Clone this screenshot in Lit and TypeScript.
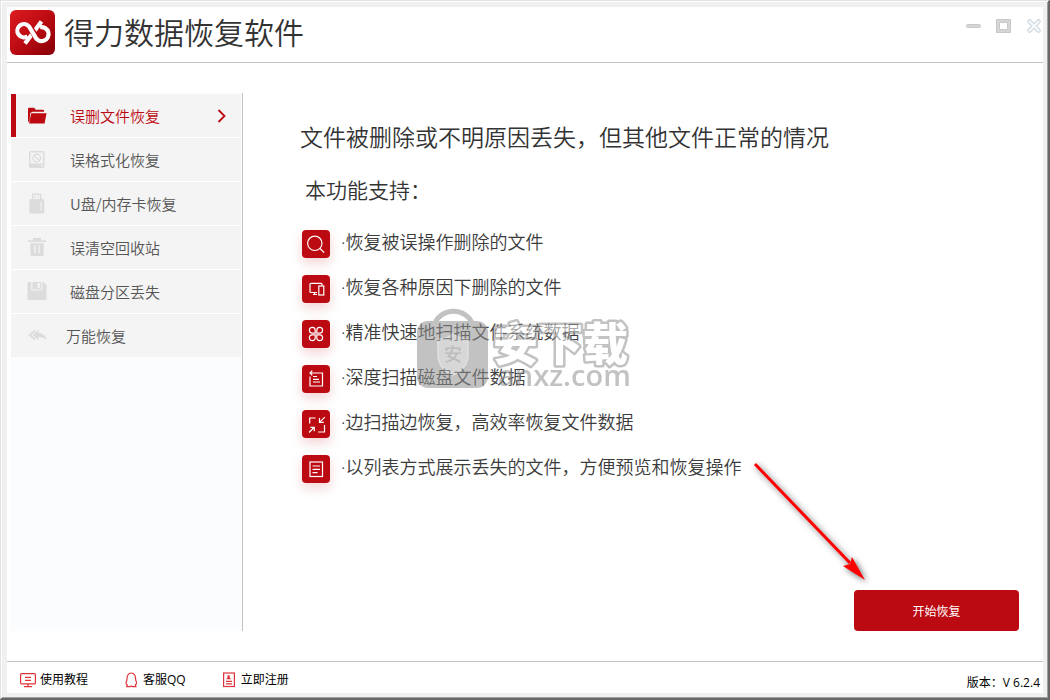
import { LitElement, html, css, svg } from "lit";
import { customElement, state } from "lit/decorators.js";
import { classMap } from "lit/directives/class-map.js";

const navIcons = {
  folder: svg`<path fill="#bc0a12" d="M1 4q0-1.200 1.200-1.200h5l1.500 2h7.300q1 0 1 1v1H5.500L3.300 8 2.500 16 1 17z"/><path fill="#bc0a12" d="M4.200 8.200h15.300L17.600 18.500H2z"/>`,
  disk: svg`<path fill="#dcdcdc" fill-rule="evenodd" d="M3.500 2h12.500q1.500 0 1.500 1.500v14q0 1.500-1.500 1.500h-12.500q-1.500 0-1.500-1.500v-14q0-1.500 1.500-1.500zM3.500 3.500v11h12.500v-11zM14 16v1.600h1.800V16z"/><g fill="none" stroke="#dcdcdc" stroke-width="1.300"><circle cx="9.800" cy="9" r="3.800"/><path d="M7.200 6.400l5.200 5.200"/></g>`,
  usb: svg`<path fill="none" stroke="#dcdcdc" stroke-width="1.400" d="M5.700 7V1.200h8V7"/><path fill="#dcdcdc" d="M7.300 3.500h1.700v1.200H7.300zM10.400 3.500h1.700v1.200h-1.700z"/><rect x="2.300" y="6" width="15" height="14.500" rx="1.500" fill="#dcdcdc"/><path stroke="#f4f4f4" stroke-width="1" d="M14 9v9"/>`,
  trash: svg`<path fill="#dcdcdc" d="M6 1h8v2.300h5v1.700H1V3.300h5zM3.300 6.300h13.400v11q0 1.700-1.700 1.700H5q-1.700 0-1.700-1.700z"/><path stroke="#f4f4f4" stroke-width="1.300" d="M7.900 8.200v8M12.100 8.200v8"/>`,
  floppy: svg`<path fill="#dcdcdc" d="M.500 1h15.500l3.500 3v15H.500z"/><path fill="none" stroke="#f4f4f4" stroke-width="1.200" d="M4.800 1v7q0 1 1 1h8q1 0 1-1V1"/><path fill="#f4f4f4" d="M10.500 2h2.200v5h-2.200z"/>`,
  reply: svg`<path fill="none" stroke="#dcdcdc" stroke-width="1.800" d="M8 5.500L2.800 10 8 14.500"/><path fill="#dcdcdc" d="M11.500 4.500v3.300q7 .4 8 7.700-2.500-3.600-8-3.500v3.300L5.500 10z"/>`,
};

const featureIcons = {
  search: svg`<circle cx="12.800" cy="13.300" r="7.200"/><path d="M18 18.500l4.200 4.200"/>`,
  devices: svg`<path d="M15 17.500H9q-1 0-1-1V9.300q0-1 1-1h10q1 0 1 1V11M11 19.500h4M12.500 17.500v2"/><rect x="16.800" y="11" width="5" height="9"/>`,
  clover: svg`<path d="M13.200 13.200h-3a2.900 2.900 0 1 1 3-3zM14.800 13.200h3a2.900 2.900 0 1 0-3-3zM13.200 14.800h-3a2.900 2.900 0 1 0 3 3zM14.800 14.800h3a2.900 2.900 0 1 1-3 3z"/>`,
  scan: svg`<path d="M8 8h12.500v13H8V11.500M10.300 5.600L8 8l2.300 2.400M11 11.500h4M11 14.300h6M11 17h7"/>`,
  shrink: svg`<path d="M13.500 8H7.700v5.500M22.500 15v7h-6.300M22.800 7.200l-5 5M17.500 8v4.300h4.300M7 22.500l5-5M8.300 17.300h4v4"/>`,
  list: svg`<rect x="8" y="7" width="12.500" height="14.500"/><path d="M10.500 11h7.500M10.500 14.300h7.500M10.500 17.600h5"/>`,
};

const footIcons = {
  board: svg`<rect x=".600" y="1.600" width="14.800" height="10.300" rx="1"/><path d="M5 5.300h6M5 8.300h6M8 12v2.500M4 14.700h8"/>`,
  penguin: svg`<path d="M4.300 13C2.500 12 2.700 10.500 3.900 8.300 3.500 4 5.500 1 8.300 1s4.800 3 4.400 7.300c1.200 2.200 1.400 3.700-.400 4.700l.6 1.700H9.500L8.300 14l-1.200.7H3.700z"/>`,
  form: svg`<rect x="2.600" y="1" width="10.800" height="13.500"/><path d="M5 11.800h6M5 9.300h6"/><path fill="#e0343c" stroke="none" d="M6.500 3.300h2.200v2l1.300 1.900H5.200l1.300-1.900z"/>`,
};

const navItems: { label: string; icon: keyof typeof navIcons }[] = [
  { label: "误删文件恢复", icon: "folder" },
  { label: "误格式化恢复", icon: "disk" },
  { label: "U盘/内存卡恢复", icon: "usb" },
  { label: "误清空回收站", icon: "trash" },
  { label: "磁盘分区丢失", icon: "floppy" },
  { label: "万能恢复", icon: "reply" },
];

const features: { label: string; icon: keyof typeof featureIcons }[] = [
  { label: "恢复被误操作删除的文件", icon: "search" },
  { label: "恢复各种原因下删除的文件", icon: "devices" },
  { label: "精准快速地扫描文件系统数据", icon: "clover" },
  { label: "深度扫描磁盘文件数据", icon: "scan" },
  { label: "边扫描边恢复，高效率恢复文件数据", icon: "shrink" },
  { label: "以列表方式展示丢失的文件，方便预览和恢复操作", icon: "list" },
];

const links: { label: string; icon: keyof typeof footIcons }[] = [
  { label: "使用教程", icon: "board" },
  { label: "客服QQ", icon: "penguin" },
  { label: "立即注册", icon: "form" },
];

@customElement("app-root")
export class AppRoot extends LitElement {
  @state() private active = 0;

  static styles = css`
    :host {
      display: block;
      font-family: "Noto Sans CJK SC", sans-serif;
      color: #333;
    }
    * {
      box-sizing: border-box;
    }
    button {
      font: inherit;
      color: inherit;
      border: 0;
      padding: 0;
      background: none;
      cursor: pointer;
    }
    svg {
      display: block;
      flex: none;
    }
    .frame {
      display: flex;
      background: #f0f0f0;
      min-height: 100vh;
      border: 1px solid #e3e3e3;
      border-right: 2px solid #696969;
      border-bottom: 2px solid #696969;
      box-shadow: inset 1px 1px #fff, inset -1px -1px #a0a0a0;
      padding: 6px 5px 5px 6px;
    }
    .sheet {
      position: relative;
      flex: 1;
      display: flex;
      flex-direction: column;
      background: #fff;
    }
    .top {
      display: flex;
      align-items: center;
      height: 56px;
      padding: 0 1px 4px 3px;
      border-bottom: 1px solid #c3c3c3;
    }
    .title {
      flex: 1;
      margin: 0 0 0 9px;
      padding-bottom: 3px;
      font-size: 30px;
      line-height: 44px;
      font-weight: 350;
    }
    .controls {
      display: flex;
      gap: 14px;
      padding-bottom: 14px;
    }
    .body {
      flex: 1;
      display: flex;
      padding: 30px 24px 30px 4px;
    }
    .side {
      width: 232px;
      padding: 1px 1px 0 0;
      border-right: 1px solid #c3c3c3;
      background: #fbfcfe;
    }
    .nav {
      display: grid;
      gap: 1px;
      background: #fff;
    }
    .item {
      display: flex;
      align-items: center;
      height: 43px;
      padding: 0 15px 0 11px;
      border-left: 5px solid #f4f4f4;
      background: #f4f4f4;
      font-size: 15px;
      font-weight: 350;
      color: #555;
      text-align: left;
    }
    .item.active {
      border-left-color: #bc0a12;
      color: #bc0a12;
    }
    .item .name {
      flex: 1;
      margin-left: 23px;
    }
    .item.near .name {
      margin-left: 19px;
    }
    .main {
      flex: 1;
      display: flex;
      flex-direction: column;
      padding: 28px 0 0 57px;
    }
    .lead {
      margin: 0;
      font-size: 23px;
      line-height: 30px;
      font-weight: 350;
    }
    .sub {
      margin: 23px 0 26px 5px;
      font-size: 21px;
      line-height: 30px;
      font-weight: 350;
    }
    .features {
      list-style: none;
      margin: 0 0 0 2px;
      padding: 0;
      display: grid;
      gap: 17px;
      font-family: "Noto Sans", "Noto Sans CJK SC", sans-serif;
      font-size: 18px;
      line-height: 24px;
      font-weight: 350;
      color: #3c3c3c;
    }
    .feature {
      display: flex;
      gap: 11px;
      height: 28px;
    }
    .tile {
      width: 28px;
      height: 28px;
      border-radius: 4px;
      background: #bc0a12;
      box-shadow: 0 5px 12px rgba(188, 10, 18, 0.18);
    }
    .line {
      fill: none;
      stroke: #fff;
      stroke-width: 1.2;
    }
    .start {
      align-self: flex-end;
      margin-top: auto;
      width: 165px;
      height: 41px;
      border-radius: 4px;
      background: #bc0a12;
      color: #fff;
      font-size: 12px;
    }
    .foot {
      display: flex;
      align-items: center;
      gap: 35px;
      height: 32px;
      padding: 5px 3px 0 13px;
      border-top: 1px solid #c3c3c3;
      font-family: "Open Sans", "Noto Sans CJK SC", sans-serif;
      font-size: 12px;
      line-height: 18px;
      color: #000;
    }
    .link {
      display: flex;
      align-items: center;
      gap: 4px;
      color: inherit;
      text-decoration: none;
    }
    .red {
      fill: none;
      stroke: #e0343c;
      stroke-width: 1.2;
    }
    .version {
      margin: 6px 0 0 auto;
    }
    .arrow {
      position: absolute;
      left: 743px;
      top: 451px;
      pointer-events: none;
      filter: drop-shadow(2px 2px 3px rgba(0, 0, 0, 0.6));
    }
    .mark {
      position: absolute;
      left: 403px;
      top: 293px;
      pointer-events: none;
    }
    .cn {
      font: 900 45px "Noto Sans CJK SC", sans-serif;
    }
    .com {
      font: 600 29px "Open Sans", sans-serif;
    }
    .seal {
      font: 500 18px "Noto Sans CJK SC", sans-serif;
    }
  `;

  render() {
    return html`
      <div class="frame">
        <div class="sheet">
          <header class="top">
            <svg width="45" height="45" viewBox="0 0 45 45" aria-hidden="true">
              <defs>
                <linearGradient id="lg" x1="0" y1="0" x2="1" y2="1">
                  <stop offset="0" stop-color="#dc1c20" />
                  <stop offset=".5" stop-color="#bc0b12" />
                  <stop offset="1" stop-color="#850006" />
                </linearGradient>
              </defs>
              <rect width="45" height="45" rx="6" fill="url(#lg)" />
              <g fill="none">
                <path stroke="#fff" stroke-width="4.200" d="M31.500 11.500L15 33.500" />
                <path stroke="#b80b12" stroke-width="6" d="M20 17.500L25.500 26" />
                <path stroke="#fff" stroke-width="4.200" d="M17.500 26.300A6.600 6.600 0 1 1 19 16.500L25 26.500A7 7 0 1 0 30 17.300" />
              </g>
            </svg>
            <h1 class="title">得力数据恢复软件</h1>
            <div class="controls">
              <button aria-label="最小化">
                <svg width="17" height="16" viewBox="0 0 17 16"><rect x="1.500" y="6.500" width="14" height="3" rx="1" fill="#d6d6d6" stroke="#c6c9cc" /></svg>
              </button>
              <button aria-label="最大化">
                <svg width="16" height="16" viewBox="0 0 16 16"><path fill="#d6d6d6" stroke="#c6c9cc" fill-rule="evenodd" d="M.500 1.500h14v13H.500zM3.500 4.500v7h8v-7z" /></svg>
              </button>
              <button aria-label="关闭">
                <svg width="16" height="16" viewBox="0 0 16 16"><path stroke="#c8ccd0" stroke-width="4.500" stroke-linecap="round" d="M3.500 3.500l9 9M12.500 3.500l-9 9" /><path stroke="#f3f8fc" stroke-width="2.600" stroke-linecap="round" d="M3.500 3.500l9 9M12.500 3.500l-9 9" /></svg>
              </button>
            </div>
          </header>

          <div class="body">
            <aside class="side">
              <nav class="nav">
                ${navItems.map(
                  (n, i) => html`
                    <button
                      class=${classMap({ item: true, active: i === this.active, near: n.icon === "reply" })}
                      @click=${() => (this.active = i)}
                    >
                      <svg width="20" height="21" viewBox="0 0 20 21" aria-hidden="true">${navIcons[n.icon]}</svg>
                      <span class="name">${n.label}</span>
                      ${i === this.active
                        ? html`<svg width="9" height="14" viewBox="0 0 9 14"><path fill="none" stroke="#bc0a12" stroke-width="1.800" d="M1.500 1l6 6-6 6" /></svg>`
                        : null}
                    </button>
                  `
                )}
              </nav>
            </aside>

            <main class="main">
              <h2 class="lead">文件被删除或不明原因丢失，但其他文件正常的情况</h2>
              <h3 class="sub">本功能支持：</h3>
              <ul class="features">
                ${features.map(
                  (f) => html`
                    <li class="feature">
                      <svg class="tile" viewBox="0 0 28 28" aria-hidden="true"><g class="line">${featureIcons[f.icon]}</g></svg>
                      <span>·${f.label}</span>
                    </li>
                  `
                )}
              </ul>
              <button class="start">开始恢复</button>
            </main>
          </div>

          <footer class="foot">
            ${links.map(
              (l) => html`
                <a class="link" href="#">
                  <svg class="red" width="16" height="16" viewBox="0 0 16 16" aria-hidden="true">${footIcons[l.icon]}</svg>
                  <span>${l.label}</span>
                </a>
              `
            )}
            <span class="version">版本：V 6.2.4</span>
          </footer>

          <svg class="mark" width="230" height="100" viewBox="0 0 230 100" aria-hidden="true">
            <g opacity=".55">
              <path fill="none" stroke="#919191" stroke-width="5" d="M25 23a19.500 17 0 0 1 37 0" />
              <rect x="7" y="21" width="71" height="67" rx="11" fill="#919191" />
              <path fill="#b8b8b8" stroke="#c8c8c8" stroke-width="1.500" d="M43 34q7 5 15 5v16q0 13-15 20-15-7-15-20V39q8 0 15-5z" />
              <text class="seal" x="34" y="61" fill="#848484">安</text>
              <text class="cn" x="83" y="61" fill="#fff" stroke="#919191" stroke-width="5" stroke-linejoin="round" paint-order="stroke">安下载</text>
              <text class="com" x="88" y="86" fill="#919191">anxz.com</text>
            </g>
          </svg>

          <svg class="arrow" width="120" height="130" viewBox="0 0 120 130" aria-hidden="true">
            <path stroke="#f00" stroke-width="3" d="M5 6L100 105" />
            <path fill="#f00" d="M115 122L93 108l7-2 2-7z" />
          </svg>
        </div>
      </div>
    `;
  }
}
